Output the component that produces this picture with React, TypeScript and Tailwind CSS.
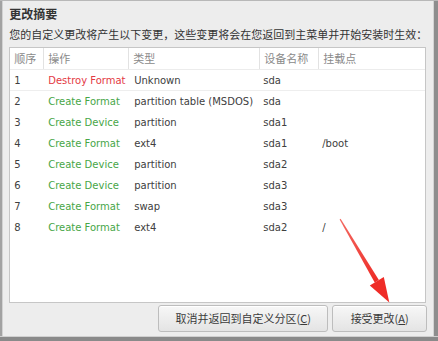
const rows = [
  { n: "1", op: "Destroy Format", red: true, type: "Unknown", dev: "sda", mount: "" },
  { n: "2", op: "Create Format", red: false, type: "partition table (MSDOS)", dev: "sda", mount: "" },
  { n: "3", op: "Create Device", red: false, type: "partition", dev: "sda1", mount: "" },
  { n: "4", op: "Create Format", red: false, type: "ext4", dev: "sda1", mount: "/boot" },
  { n: "5", op: "Create Device", red: false, type: "partition", dev: "sda2", mount: "" },
  { n: "6", op: "Create Device", red: false, type: "partition", dev: "sda3", mount: "" },
  { n: "7", op: "Create Format", red: false, type: "swap", dev: "sda3", mount: "" },
  { n: "8", op: "Create Format", red: false, type: "ext4", dev: "sda2", mount: "/" },
];

const cols = "grid grid-cols-[34px_85px_131px_59px_1fr]";
const latin = "font-['DejaVu_Sans','Noto_Sans_CJK_SC',sans-serif]";
const cjk = "font-['Noto_Sans_CJK_SC','DejaVu_Sans',sans-serif]";

function Header() {
  const titles = ["顺序", "操作", "类型", "设备名称", "挂载点"];
  return (
    <div className={`${cols} h-[22px] border-b border-[#ececec] ${cjk} text-[11px] text-[#8a8a8a]`}>
      {titles.map((t, i) => (
        <div
          key={t}
          className={`flex items-center pl-[4px] ${i < 4 ? "border-r border-[#e2e2e2]" : ""}`}
        >
          {t}
        </div>
      ))}
    </div>
  );
}

function Arrow() {
  return (
    <svg className="absolute left-0 top-0 pointer-events-none" width="438" height="341">
      <defs>
        <linearGradient id="ar" x1="0" y1="0" x2="0" y2="1">
          <stop offset="0" stopColor="#f36a62" />
          <stop offset="1" stopColor="#ee2a25" />
        </linearGradient>
      </defs>
      <polygon
        points="339.6,218.4 340.6,217.8 378.9,279.1 374.7,281.6"
        fill="url(#ar)"
      />
      <polygon points="369.8,284.6 383.8,276.0 389.3,301.5" fill="#ef2c27" />
    </svg>
  );
}

export default function App() {
  return (
    <div className="relative w-[438px] h-[341px] flex flex-col bg-[#ededed] border-t border-[#b8b8b8]">
      <div className="flex flex-1 min-h-0">
        <div className="w-[3px] bg-[#a2a2a2]" />
        <div className="w-[1px] bg-[#d2d2d2]" />
        <div className="flex-1 flex flex-col pl-[6px] pr-[6px]">
          <p className={`${cjk} text-[12px] font-bold text-[#333] leading-[16px] mt-[5px]`}>
            更改摘要
          </p>
          <p className={`${cjk} text-[11px] text-[#333] leading-[16px] mt-[4px] whitespace-nowrap`}>
            您的自定义更改将产生以下变更，这些变更将会在您返回到主菜单并开始安装时生效：
          </p>
          <div className="mt-[5px] h-[256px] bg-white border border-[#c6c6c6] mr-[1px]">
            <Header />
            {rows.map((r, i) => (
              <div
                key={r.n}
                className={`${cols} h-[21px] ${latin} text-[10px] text-[#404040] ${i === 0 ? "border-b border-[#eeeeee]" : ""}`}
              >
                <div className="flex items-center pl-[4px]">{r.n}</div>
                <div
                  className={`flex items-center pl-[4px] whitespace-nowrap ${r.red ? "text-[#e43a44]" : "text-[#47a647]"}`}
                >
                  {r.op}
                </div>
                <div className="flex items-center pl-[5px] whitespace-nowrap">{r.type}</div>
                <div className="flex items-center pl-[3px]">{r.dev}</div>
                <div className="flex items-center pl-[3px]">{r.mount}</div>
              </div>
            ))}
          </div>
          <div className="flex justify-end gap-[4px] mt-[2px]">
            <button
              className={`w-[170px] h-[27px] rounded-[3px] border border-[#bdbdbd] bg-gradient-to-b from-[#f7f7f7] to-[#e4e4e4] ${cjk} text-[11px] text-[#3a3a3a] shadow-[inset_0_1px_0_#ffffff]`}
            >
              取消并返回到自定义分区(<span className="underline">C</span>)
            </button>
            <button
              className={`w-[95px] h-[27px] rounded-[3px] border border-[#bdbdbd] bg-gradient-to-b from-[#f7f7f7] to-[#e4e4e4] ${cjk} text-[11px] text-[#3a3a3a] shadow-[inset_0_1px_0_#ffffff]`}
            >
              接受更改(<span className="underline">A</span>)
            </button>
          </div>
        </div>
        <div className="w-[1px] bg-[#d4d4d4]" />
        <div className="w-[5px] bg-[#8e8e8e]" />
      </div>
      <div className="h-[1px] bg-[#d0d0d0]" />
      <div className="h-[4px] bg-[#8a8a8a]" />
      <Arrow />
    </div>
  );
}
